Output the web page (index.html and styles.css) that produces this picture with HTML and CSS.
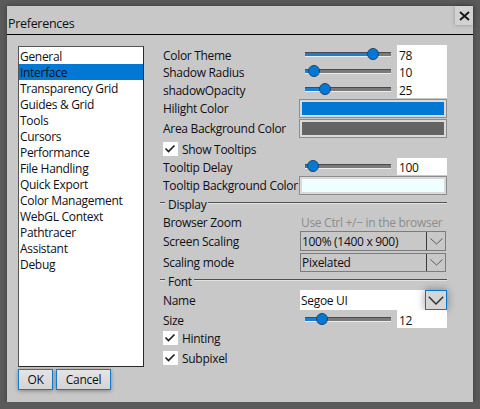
FILE: index.html
```html
<!DOCTYPE html>
<html lang="en">
<head>
    <meta charset="UTF-8">
    <meta name="viewport" content="width=device-width, initial-scale=1.0">
    <title>Preferences</title>
    <link rel="stylesheet" href="styles.css">
</head>
<body>
    <div class="dialog">
        <div class="titlebar">
            <span class="title">Preferences</span>
            <button type="button" class="close-btn">
                <svg width="11" height="10" viewBox="0 0 11 10"><path d="M1 1 L10 9 M10 1 L1 9" stroke="#151515" stroke-width="1.8" fill="none"/></svg>
            </button>
        </div>

        <div class="dialog-body">
            <div class="sidebar">
                <ul class="page-list">
                    <li>General</li>
                    <li class="selected">Interface</li>
                    <li>Transparency Grid</li>
                    <li>Guides &amp; Grid</li>
                    <li>Tools</li>
                    <li>Cursors</li>
                    <li>Performance</li>
                    <li>File Handling</li>
                    <li>Quick Export</li>
                    <li>Color Management</li>
                    <li>WebGL Context</li>
                    <li>Pathtracer</li>
                    <li>Assistant</li>
                    <li>Debug</li>
                </ul>
                <div class="buttons">
                    <button type="button" class="btn btn-ok">OK</button>
                    <button type="button" class="btn btn-cancel">Cancel</button>
                </div>
            </div>

            <div class="settings">
                <div class="row row-slider">
                    <span class="label">Color Theme</span>
                    <div class="slider"><div class="track"><div class="fill" style="width: 68px"></div></div><div class="thumb" style="left: 62px"></div></div>
                    <span class="value">78</span>
                </div>
                <div class="row row-slider">
                    <span class="label">Shadow Radius</span>
                    <div class="slider"><div class="track"><div class="fill" style="width: 9px"></div></div><div class="thumb" style="left: 3px"></div></div>
                    <span class="value">10</span>
                </div>
                <div class="row row-slider">
                    <span class="label">shadowOpacity</span>
                    <div class="slider"><div class="track"><div class="fill" style="width: 20px"></div></div><div class="thumb" style="left: 14px"></div></div>
                    <span class="value">25</span>
                </div>
                <div class="row row-well">
                    <span class="label">Hilight Color</span>
                    <div class="well"><div class="swatch swatch-blue"></div></div>
                </div>
                <div class="row row-well">
                    <span class="label">Area Background Color</span>
                    <div class="well"><div class="swatch swatch-gray"></div></div>
                </div>
                <div class="row row-check">
                    <span class="checkbox"><svg width="15" height="13" viewBox="0 0 15 13"><path d="M2.5 6.5 L5.5 9.5 L11.5 3.5" stroke="#1e1e1e" stroke-width="1.6" fill="none"/></svg></span>
                    <span>Show Tooltips</span>
                </div>
                <div class="row row-slider">
                    <span class="label">Tooltip Delay</span>
                    <div class="slider"><div class="track"><div class="fill" style="width: 8px"></div></div><div class="thumb" style="left: 2px"></div></div>
                    <span class="value">100</span>
                </div>
                <div class="row row-well">
                    <span class="label">Tooltip Background Color</span>
                    <div class="well"><div class="swatch swatch-azure"></div></div>
                </div>

                <div class="separator"><span>Display</span></div>
                <div class="row row-text">
                    <span class="label">Browser Zoom</span>
                    <span class="hint">Use Ctrl +/− in the browser</span>
                </div>
                <div class="row row-select">
                    <span class="label">Screen Scaling</span>
                    <div class="select">
                        <span class="select-text">100% (1400 x 900)</span>
                        <span class="select-arrow"><svg width="13" height="7" viewBox="0 0 13 7"><path d="M0.5 0.5 L6.5 6 L12.5 0.5" stroke="#5a5a5a" stroke-width="1" fill="none"/></svg></span>
                    </div>
                </div>
                <div class="row row-select">
                    <span class="label">Scaling mode</span>
                    <div class="select">
                        <span class="select-text">Pixelated</span>
                        <span class="select-arrow"><svg width="13" height="7" viewBox="0 0 13 7"><path d="M0.5 0.5 L6.5 6 L12.5 0.5" stroke="#5a5a5a" stroke-width="1" fill="none"/></svg></span>
                    </div>
                </div>

                <div class="separator"><span>Font</span></div>
                <div class="row row-select">
                    <span class="label">Name</span>
                    <div class="select select-active">
                        <span class="select-text">Segoe UI</span>
                        <span class="select-arrow"><svg width="16" height="9" viewBox="0 0 16 9"><path d="M0.8 0.8 L8 8 L15.2 0.8" stroke="#333" stroke-width="1.5" fill="none"/></svg></span>
                    </div>
                </div>
                <div class="row row-slider">
                    <span class="label">Size</span>
                    <div class="slider"><div class="track"><div class="fill" style="width: 17px"></div></div><div class="thumb" style="left: 11px"></div></div>
                    <span class="value">12</span>
                </div>
                <div class="row row-check">
                    <span class="checkbox"><svg width="15" height="13" viewBox="0 0 15 13"><path d="M2.5 6.5 L5.5 9.5 L11.5 3.5" stroke="#1e1e1e" stroke-width="1.6" fill="none"/></svg></span>
                    <span>Hinting</span>
                </div>
                <div class="row row-check">
                    <span class="checkbox"><svg width="15" height="13" viewBox="0 0 15 13"><path d="M2.5 6.5 L5.5 9.5 L11.5 3.5" stroke="#1e1e1e" stroke-width="1.6" fill="none"/></svg></span>
                    <span>Subpixel</span>
                </div>
            </div>
        </div>
    </div>
</body>
</html>
```

FILE: styles.css
```css
body {
    font-family: "Segoe UI", "Open Sans", sans-serif;
    font-size: 12px;
    letter-spacing: -0.3px;
    color: #0f0f14;
    background-color: #5a5a5a;
    margin: 0;
}

.dialog {
    box-sizing: border-box;
    width: 466px;
    height: 396px;
    margin: 6px 0 0 7px;
    background: #c8c8c8;
    box-shadow: 0 0 5px rgba(0, 0, 0, 0.35);
}

.titlebar {
    display: flex;
    justify-content: space-between;
    align-items: flex-start;
    height: 28px;
    border-bottom: 1px solid #000;
}

.title {
    padding: 9px 0 0 1px;
    font-size: 12.5px;
}

.close-btn {
    width: 18px;
    height: 19px;
    padding: 0;
    border: none;
    background: #d2d2d2;
    box-shadow: 0 0 4px rgba(0, 0, 0, 0.25);
    display: flex;
    align-items: center;
    justify-content: center;
}

.dialog-body {
    display: flex;
    padding: 10px 0 0 11px;
}

.sidebar {
    width: 126px;
    margin-top: 1px;
}

.page-list {
    box-sizing: border-box;
    height: 321px;
    margin: 0;
    padding: 1px 0 0;
    list-style: none;
    background: #fff;
    border: 1px solid #2a2a2a;
    border-left-color: #555;
    border-top-color: #555;
}

.page-list li {
    height: 16px;
    line-height: 17px;
    padding-left: 1px;
    white-space: nowrap;
}

.page-list li.selected {
    background: #0078d4;
}

.buttons {
    display: flex;
    gap: 3px;
    margin-top: 2px;
}

.btn {
    height: 21px;
    padding: 0;
    border: 1px solid #1479cc;
    background: linear-gradient(#e4e4e4, #d4d4d4);
    box-shadow: 0 1px 4px rgba(0, 0, 0, 0.35);
    font: inherit;
    color: inherit;
    letter-spacing: inherit;
}

.btn-ok {
    width: 35px;
}

.btn-cancel {
    width: 55px;
}

.settings {
    width: 284px;
    margin-left: 19px;
}

.row {
    display: flex;
    align-items: center;
    height: 18px;
}

.label {
    flex: none;
    width: 137px;
    white-space: nowrap;
}

.row-slider {
    height: 17.5px;
}

.row-slider .label {
    padding-top: 3px;
}

.slider {
    position: relative;
    width: 86px;
    height: 12px;
    margin-left: 5px;
}

.track {
    position: absolute;
    left: 0;
    right: 0;
    top: 4px;
    height: 3px;
    background: #7a7a7a;
    border-top: 1px solid #4a4a4a;
    border-bottom: 1px solid #ececec;
}

.fill {
    height: 100%;
    background: #1a7fd2;
}

.thumb {
    position: absolute;
    top: 0;
    box-sizing: border-box;
    width: 12px;
    height: 12px;
    border-radius: 50%;
    background: #0078d4;
    border: 1px solid #23466a;
}

.value {
    align-self: stretch;
    display: flex;
    align-items: center;
    box-sizing: border-box;
    width: 50px;
    margin-left: 6px;
    padding: 3px 0 0 2px;
    background: #fff;
}

.row-well {
    height: 19px;
    margin-top: 1px;
}

.well {
    box-sizing: border-box;
    width: 148px;
    height: 100%;
    margin-left: -1px;
    padding: 2px;
    border: 1px solid #8c8c8c;
    background: #dadada;
}

.swatch {
    height: 100%;
}

.swatch-blue {
    background: #0078d4;
}

.swatch-gray {
    background: #646464;
}

.swatch-azure {
    background: #effefe;
}

.row-check {
    height: 17px;
    margin-top: 3px;
}

.row-slider + .row-check {
    margin-top: 2px;
}

.checkbox {
    display: flex;
    width: 15px;
    height: 14px;
    margin-right: 4px;
    background: #fff;
}

.separator {
    display: flex;
    align-items: center;
    height: 18px;
    margin-left: -3px;
}

.separator::before,
.separator::after {
    content: "";
    height: 0;
    border-top: 1px solid #505050;
    border-bottom: 1px solid #e2e2e2;
    margin-top: -2px;
}

.separator::before {
    width: 5px;
}

.separator::after {
    flex: 1;
}

.separator span {
    padding: 0 2px 0 3px;
}

.hint {
    padding-left: 1px;
    color: #8c8c8c;
    white-space: nowrap;
}

.row-select {
    height: 20px;
}

.row-select + .row-select {
    height: 19px;
    margin-top: 2px;
}

.select {
    box-sizing: border-box;
    display: flex;
    width: 146px;
    height: 100%;
    border: 1px solid #7c7c7c;
}

.select-text {
    flex: 1;
    display: flex;
    align-items: center;
    padding-left: 1px;
    white-space: nowrap;
}

.select-arrow {
    display: flex;
    align-items: center;
    justify-content: center;
    width: 18px;
    border-left: 1px solid #3a3a3a;
}

.select-active {
    width: 147px;
    border: none;
    background: #fff;
}

.select-active .select-arrow {
    width: 20px;
    border: 1px solid #0078d4;
    background: #d6d6d6;
    box-shadow: 0 0 9px rgba(0, 0, 0, 0.4);
}
```
